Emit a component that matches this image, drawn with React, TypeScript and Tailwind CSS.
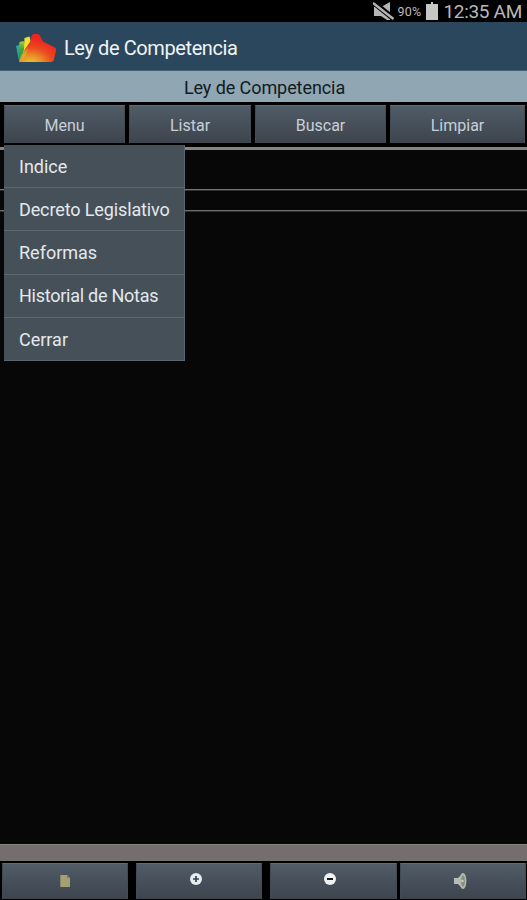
import type { ReactNode } from 'react';

const menuItems = [
  { label: 'Indice', tracking: '' },
  { label: 'Decreto Legislativo', tracking: 'tracking-[-0.12px]' },
  { label: 'Reformas', tracking: '' },
  { label: 'Historial de Notas', tracking: 'tracking-[-0.25px]' },
  { label: 'Cerrar', tracking: '' },
];

function BarButton({ className, children }: { className: string; children: ReactNode }) {
  return (
    <button
      className={`flex shrink-0 items-center justify-center border-x border-t border-x-[#434c54] border-t-[#626b72] bg-linear-to-b from-[#505c66] to-[#3d444e] ${className}`}
    >
      {children}
    </button>
  );
}

function Logo() {
  return (
    <svg width="42" height="32" viewBox="0 0 42 32" className="relative top-[2px] shrink-0">
      <defs>
        <radialGradient id="folder" cx="0.3" cy="1.1" r="0.95">
          <stop offset="0" stopColor="#e3cf2c" />
          <stop offset="0.3" stopColor="#ea9a28" />
          <stop offset="0.65" stopColor="#ea4a20" />
          <stop offset="1" stopColor="#ee241d" />
        </radialGradient>
        <linearGradient id="leaf" x1="0" y1="0" x2="0" y2="1">
          <stop offset="0" stopColor="#a8cf3c" />
          <stop offset="0.4" stopColor="#43a448" />
          <stop offset="1" stopColor="#258c48" />
        </linearGradient>
      </defs>
      <path d="M1 14l3-1 3 5-1 9-2 2z" fill="#28a9a3" />
      <path d="M4.5 10l4-1 3 7-3 10-4 3-1-9z" fill="url(#leaf)" />
      <path d="M9.5 6l5-1.5 1.5 6-3 8-7 10 3-11z" fill="#f0e32b" />
      <path d="M4 30l6-13 5.5-8 .5-4 2-3h5l1.5 1 3.5 6.5 13 6.5v3l-2.5 10-2 1z" fill="url(#folder)" />
      <path d="M4 30l2-7 7-7-2 8z" fill="#d8bd2b" opacity=".55" />
    </svg>
  );
}

export default function App() {
  return (
    <div className="relative flex h-[900px] w-[527px] flex-col overflow-hidden bg-[#070707] font-['Roboto',sans-serif]">
      <header className="flex h-[22px] shrink-0 items-center justify-end bg-black pr-[5px] text-[#b9b9b9]">
        <svg width="22" height="20" viewBox="0 0 22 20" className="mr-[2px]">
          <path d="M1 6h7l9-5v18h-3l-6-4H1z" fill="#b5b5b5" />
          <path d="M0 1l21 17" stroke="#000" strokeWidth="5.5" />
          <path d="M0 2l20.5 16" stroke="#b5b5b5" strokeWidth="2.4" />
        </svg>
        <span className="w-[27px] pt-[2px] text-[12.5px] leading-none tracking-[0.3px]">90%</span>
        <svg width="12" height="20" viewBox="0 0 12 20" className="mr-[5px] ml-[2px]">
          <path d="M5 1h2v2h5v16H0V3h5z" fill="#c7c7c7" />
        </svg>
        <span className="text-[19px] leading-none tracking-[-0.3px] whitespace-nowrap">12:35 AM</span>
      </header>

      <div className="flex h-[49px] shrink-0 items-center border-b border-[#456177] bg-[#2b475d] pl-[15px]">
        <Logo />
        <h1 className="ml-[7px] pt-[3px] text-[20px] tracking-[-0.4px] text-[#f0f4f6]">Ley de Competencia</h1>
      </div>
      <div className="flex h-[31px] shrink-0 items-center justify-center bg-[#90a6b3] pt-[2px] pl-[2px] text-[18px] tracking-[-0.08px] text-[#101b22]">
        Ley de Competencia
      </div>

      <nav className="flex h-[45px] shrink-0 bg-black pt-[3px] pl-[4px] text-[16px] text-[#c8d0d6]">
        <BarButton className="mr-[4px] h-[38px] w-[121px] pt-[2px]">Menu</BarButton>
        <BarButton className="mr-[4px] h-[38px] w-[122px] pt-[2px]">Listar</BarButton>
        <BarButton className="mr-[4px] h-[38px] w-[131px] pt-[2px]">Buscar</BarButton>
        <BarButton className="h-[38px] w-[135px] pt-[2px]">Limpiar</BarButton>
      </nav>
      <div className="h-[43px] shrink-0 border-t-[3px] border-b border-t-[#858585] border-b-[#777777]" />
      <div className="h-[21px] shrink-0 border-t border-b border-t-[#303030] border-b-[#6d6d6d]" />
      <main className="flex-1 border-t border-[#303030]" />

      <div className="h-[17px] shrink-0 border-t border-[#85817f] bg-[#746f6d]" />
      <footer className="flex h-[39px] shrink-0 bg-black pt-[2px] pl-[2px]">
        <BarButton className="mr-[8px] h-[36px] w-[126px]">
          <svg width="12" height="14" viewBox="0 0 12 14" className="relative top-[-1px]">
            <path d="M1 1h7l3 3v9H1z" fill="#a69f72" />
            <path d="M1 1h1v12H1z" fill="#85886f" />
            <path d="M8 1v3h3" fill="#777e70" />
          </svg>
        </BarButton>
        <BarButton className="mr-[8px] h-[36px] w-[126px]">
          <svg width="14" height="14" viewBox="0 0 14 14" className="relative top-[-3px] left-[-3px]">
            <circle cx="7" cy="7" r="6" fill="#e6edf1" />
            <path d="M7 4v6M4 7h6" stroke="#35424d" strokeWidth="1.7" />
          </svg>
        </BarButton>
        <BarButton className="mr-[3px] h-[36px] w-[127px]">
          <svg width="14" height="14" viewBox="0 0 14 14" className="relative top-[-3px] left-[-4px]">
            <circle cx="7" cy="7" r="6" fill="#f0f3f5" />
            <path d="M4 7h6" stroke="#15191d" strokeWidth="2" />
          </svg>
        </BarButton>
        <BarButton className="h-[36px] w-[126px]">
          <svg width="14" height="18" viewBox="0 0 14 18" className="relative top-[-1px] left-[-3px]">
            <path d="M1 6h4l5-5v16l-5-5H1z" fill="#b6bdb9" />
            <ellipse cx="10" cy="9" rx="3.4" ry="8" fill="#b4b9aa" />
            <ellipse cx="10" cy="9" rx="1.8" ry="5.5" fill="#858c83" />
            <circle cx="9.5" cy="9" r="1.3" fill="#c5c8bd" />
          </svg>
        </BarButton>
      </footer>

      <div className="absolute top-[145px] left-[4px] flex h-[216px] w-[181px] flex-col border-r border-b border-[#5c666e] bg-[#465059] text-[18px] text-[#e3e9ed]">
        {menuItems.map(({ label, tracking }) => (
          <button
            key={label}
            className={`flex min-h-0 flex-1 items-center border-b border-[#5c676f] pt-[0.5px] pl-[15px] text-left whitespace-nowrap last:border-b-0 ${tracking}`}
          >
            {label}
          </button>
        ))}
      </div>
    </div>
  );
}
